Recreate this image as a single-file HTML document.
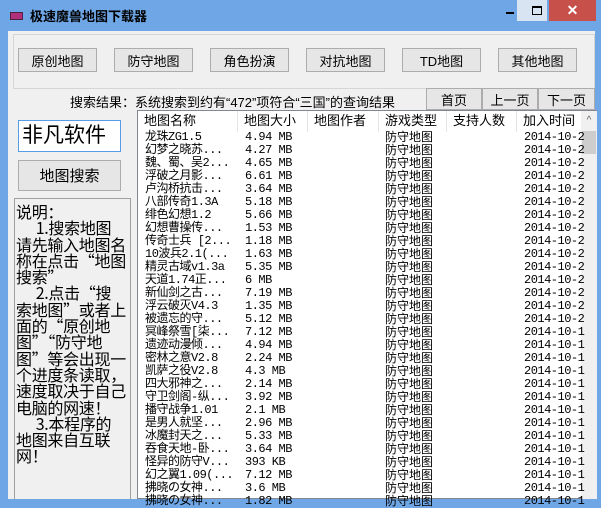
<!DOCTYPE html>
<html><head><meta charset="utf-8"><style>
*{margin:0;padding:0;box-sizing:border-box}
body{width:601px;height:499px;overflow:hidden;background:#6ea6e6;font-family:"Liberation Sans","Noto Sans CJK SC",sans-serif;font-size:12px;color:#000;position:relative}
.abs{position:absolute}
.title{left:30px;top:6px;font-size:13px;font-weight:bold;color:#000}
.client{left:8px;top:31px;width:587px;height:468px;background:#f0f0f0}
.btn{position:absolute;background:#e6e6e6;border:1px solid #acacac;text-align:center;font-size:13px;display:flex;align-items:center;justify-content:center}
.list{position:absolute;left:137px;top:110px;width:460px;height:389px;background:#fff;border:1px solid #828790}
.hdr{position:absolute;top:0;height:21px;font-size:13px;line-height:20px;border-right:1px solid #e5e5e5;padding-left:6px}
.row{position:absolute;left:0;height:13px;line-height:13px;font-family:"Liberation Mono","Noto Sans CJK SC",monospace;font-size:12px;letter-spacing:-0.5px;white-space:nowrap}
.row span{position:absolute}
</style></head><body>
<div class="abs" style="left:10px;top:12px;width:13px;height:8px;background:#b0307a;border:1px solid #502040"></div>
<div class="abs title">极速魔兽地图下载器</div>
<div class="abs" style="left:517px;top:0;width:30px;height:21px;background:#d8e4f2"></div>
<div class="abs" style="left:506px;top:12px;width:8px;height:2px;background:#000"></div>
<div class="abs" style="left:532px;top:6px;width:10px;height:9px;border:1px solid #000;border-top-width:2px"></div>
<div class="abs" style="left:549px;top:0;width:47px;height:21px;background:#c7504b;color:#fff;text-align:center;font-size:14px;line-height:20px;font-weight:bold">✕</div>
<div class="abs client"></div>
<div class="abs" style="left:13px;top:34px;width:582px;height:55px;border:1px solid #d5d5d5"></div>
<div class="btn" style="left:18px;top:48px;width:79px;height:24px">原创地图</div>
<div class="btn" style="left:114px;top:48px;width:79px;height:24px">防守地图</div>
<div class="btn" style="left:210px;top:48px;width:79px;height:24px">角色扮演</div>
<div class="btn" style="left:306px;top:48px;width:79px;height:24px">对抗地图</div>
<div class="btn" style="left:402px;top:48px;width:79px;height:24px">TD地图</div>
<div class="btn" style="left:498px;top:48px;width:79px;height:24px">其他地图</div>
<div class="abs" style="left:70px;top:92px;font-size:13px">搜索结果：系统搜索到约有“472”项符合“三国”的查询结果</div>
<div class="btn" style="left:426px;top:88px;width:56px;height:22px">首页</div>
<div class="btn" style="left:482px;top:88px;width:56px;height:22px">上一页</div>
<div class="btn" style="left:538px;top:88px;width:57px;height:22px">下一页</div>
<div class="abs" style="left:18px;top:120px;width:103px;height:32px;background:#fff;border:1px solid #569de5;font-size:21px;line-height:30px;padding-left:3px">非凡软件</div>
<div class="btn" style="left:18px;top:160px;width:103px;height:31px;font-size:15px">地图搜索</div>
<div class="abs" style="left:14px;top:198px;width:117px;height:301px;border:1px solid #a0a0a0;border-bottom:none;font-family:'Noto Sans CJK SC',sans-serif;font-size:16px;line-height:16.3px;padding:4px 0 0 1px;white-space:nowrap;letter-spacing:-0.3px">说明：<br>&nbsp;&nbsp;&nbsp;&nbsp;&nbsp;&nbsp;1.搜索地图<br>请先输入地图名<br>称在点击“地图<br>搜索”<br>&nbsp;&nbsp;&nbsp;&nbsp;&nbsp;&nbsp;2.点击“搜<br>索地图”或者上<br>面的“原创地<br>图”“防守地<br>图”等会出现一<br>个进度条读取，<br>速度取决于自己<br>电脑的网速！<br>&nbsp;&nbsp;&nbsp;&nbsp;&nbsp;&nbsp;3.本程序的<br>地图来自互联<br>网！</div>
<div class="list">
<div class="hdr" style="left:0;width:100px">地图名称</div>
<div class="hdr" style="left:100px;width:70px">地图大小</div>
<div class="hdr" style="left:170px;width:71px">地图作者</div>
<div class="hdr" style="left:241px;width:68px">游戏类型</div>
<div class="hdr" style="left:309px;width:70px">支持人数</div>
<div class="hdr" style="left:379px;width:64px;border:none">加入时间</div>
<div class="abs" style="left:443px;top:0;width:16px;height:388px;background:#f0f0f0"></div>
<div class="abs" style="left:444px;top:4px;width:14px;font-size:10px;color:#606060;text-align:center">^</div>
<div class="abs" style="left:444px;top:20px;width:14px;height:23px;background:#cdcdcd"></div>
<div id="rows"></div>
</div>
<script>
var d=[["龙珠ZG1.5","4.94 MB"],["幻梦之晓苏...","4.27 MB"],["魏、蜀、吴2...","4.65 MB"],["浮破之月影...","6.61 MB"],["卢沟桥抗击...","3.64 MB"],["八部传奇1.3A","5.18 MB"],["绯色幻想1.2","5.66 MB"],["幻想曹操传...","1.53 MB"],["传奇士兵 [2...","1.18 MB"],["10波兵2.1(...","1.63 MB"],["精灵古域v1.3a","5.35 MB"],["天道1.74正...","6 MB"],["新仙剑之古...","7.19 MB"],["浮云破灭V4.3","1.35 MB"],["被遗忘的守...","5.12 MB"],["冥峰祭雪[柒...","7.12 MB"],["遗迹动漫倾...","4.94 MB"],["密林之意V2.8","2.24 MB"],["凯萨之役V2.8","4.3 MB"],["四大邪神之...","2.14 MB"],["守卫剑阁-纵...","3.92 MB"],["播守战争1.01","2.1 MB"],["是男人就坚...","2.96 MB"],["冰魔封天之...","5.33 MB"],["吞食天地-卧...","3.64 MB"],["怪异的防守V...","393 KB"],["幻之翼1.09(...","7.12 MB"],["拂晓の女神...","3.6 MB"],["拂晓の女神...","1.82 MB"]];
var h="";d.forEach(function(r,i){h+='<div class="row" style="top:'+(20+i*13)+'px"><span style="left:7px">'+r[0]+'</span><span style="left:107px">'+r[1]+'</span><span style="left:247px;font-family:\'Liberation Sans\',\'Noto Sans CJK SC\',sans-serif;letter-spacing:0">防守地图</span><span style="left:386px">2014-10-'+(i<15?2:1)+'</span></div>';});
document.getElementById("rows").innerHTML=h;
</script>
</body></html>
